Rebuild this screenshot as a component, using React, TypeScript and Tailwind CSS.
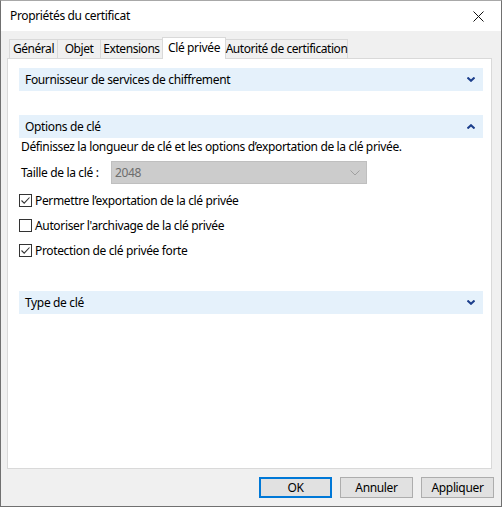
import React from "react"

const tabs = [
  { label: "Général", w: "w-[49px]" },
  { label: "Objet", w: "w-[44px]" },
  { label: "Extensions", w: "w-[63px]" },
  { label: "Clé privée", w: "w-[64px]", active: true },
  { label: "Autorité de certification", w: "w-[123px]" },
]

function Chevron({ up }: { up?: boolean }) {
  return (
    <svg width="8" height="5" viewBox="0 0 8 5" className="shrink-0">
      <path
        d={up ? "M0.5 4.5 L4 1.2 L7.5 4.5" : "M0.5 0.5 L4 3.8 L7.5 0.5"}
        fill="none"
        stroke="#1c3f8c"
        strokeWidth="2"
      />
    </svg>
  )
}

function SectionBar({ title, up }: { title: string; up?: boolean }) {
  return (
    <div className="h-[23px] w-[464px] bg-[#e5f1fb] flex items-center justify-between pl-[6px] pr-[8px]">
      <span>{title}</span>
      <Chevron up={up} />
    </div>
  )
}

function Check({ checked, label }: { checked?: boolean; label: string }) {
  return (
    <div className="h-[25px] flex items-center">
      <div className="w-[13px] h-[13px] border border-[#333333] bg-white flex items-center justify-center">
        {checked && (
          <svg width="11" height="11" viewBox="0 0 11 11">
            <path d="M1.5 5.5 L4.2 8.2 L9.5 2.5" fill="none" stroke="#333333" strokeWidth="1.1" />
          </svg>
        )}
      </div>
      <span className="ml-[3px]">{label}</span>
    </div>
  )
}

export default function App() {
  return (
    <div className="w-[502px] h-[507px] flex flex-col bg-[#f0f0f0] border-x border-b border-t border-[#707070] border-t-[#a8a8a8] text-[12px] text-black font-['Noto_Sans','Liberation_Sans',sans-serif] tracking-[-0.35px] leading-[16px] overflow-hidden">
      {/* Title bar */}
      <div className="h-[30px] bg-white flex items-center justify-between pl-[9px] pr-[17px] shrink-0">
        <span className="text-[12px]">Propriétés du certificat</span>
        <svg width="11" height="11" viewBox="0 0 11 11">
          <path d="M0.5 0.5 L10.5 10.5 M10.5 0.5 L0.5 10.5" stroke="#111" strokeWidth="1" />
        </svg>
      </div>

      {/* Body */}
      <div className="flex-1 flex flex-col pl-[6px] pt-[6px]">
        {/* Tabs */}
        <div className="h-[21px] flex items-end pl-[2px] relative z-10">
          {tabs.map((t, i) =>
            t.active ? (
              <div
                key={t.label}
                className={`${t.w} h-[22px] -ml-px bg-white border border-b-0 border-[#d9d9d9] flex items-center justify-center whitespace-nowrap -mb-px pb-[2px]`}
              >
                {t.label}
              </div>
            ) : (
              <div
                key={t.label}
                className={`${t.w} h-[19px] ${i === 0 ? "" : "-ml-px"} bg-[#f0f0f0] border border-b-0 border-[#d9d9d9] flex items-center justify-center whitespace-nowrap tracking-[-0.45px]`}
              >
                {t.label}
              </div>
            )
          )}
        </div>

        {/* Panel */}
        <div className="w-[485px] h-[411px] bg-white border border-[#d9d9d9] flex flex-col pl-[11px] shrink-0">
          <div className="mt-[9px]">
            <SectionBar title="Fournisseur de services de chiffrement" />
          </div>
          <div className="mt-[24px]">
            <SectionBar title="Options de clé" up />
          </div>
          <div className="pl-[2px] h-[16px] mt-[1px]">
            Définissez la longueur de clé et les options d’exportation de la clé privée.
          </div>
          <div className="mt-[6px] h-[23px] flex items-center pl-[2px]">
            <span className="w-[90px]">Taille de la clé :</span>
            <div className="w-[256px] h-[23px] bg-[#cccccc] border border-[#bfbfbf] flex items-center justify-between pl-[3px] pr-[6px] text-[#6d6d6d]">
              <span>2048</span>
              <svg width="10" height="6" viewBox="0 0 10 6">
                <path d="M0.5 0.5 L5 5 L9.5 0.5" fill="none" stroke="#a0a0a0" strokeWidth="1" />
              </svg>
            </div>
          </div>
          <div className="mt-[4px]">
            <Check checked label="Permettre l’exportation de la clé privée" />
            <Check label="Autoriser l'archivage de la clé privée" />
            <Check checked label="Protection de clé privée forte" />
          </div>
          <div className="mt-[28px]">
            <SectionBar title="Type de clé" />
          </div>
        </div>

        {/* Buttons */}
        <div className="mt-[8px] flex gap-[8px] pl-[252px]">
          <button className="w-[73px] h-[21px] bg-[#e1e1e1] border-2 border-[#0078d7] flex items-center justify-center">
            OK
          </button>
          <button className="w-[73px] h-[21px] bg-[#e1e1e1] border border-[#adadad] flex items-center justify-center">
            Annuler
          </button>
          <button className="w-[73px] h-[21px] bg-[#e1e1e1] border border-[#adadad] flex items-center justify-center">
            Appliquer
          </button>
        </div>
      </div>
    </div>
  )
}
